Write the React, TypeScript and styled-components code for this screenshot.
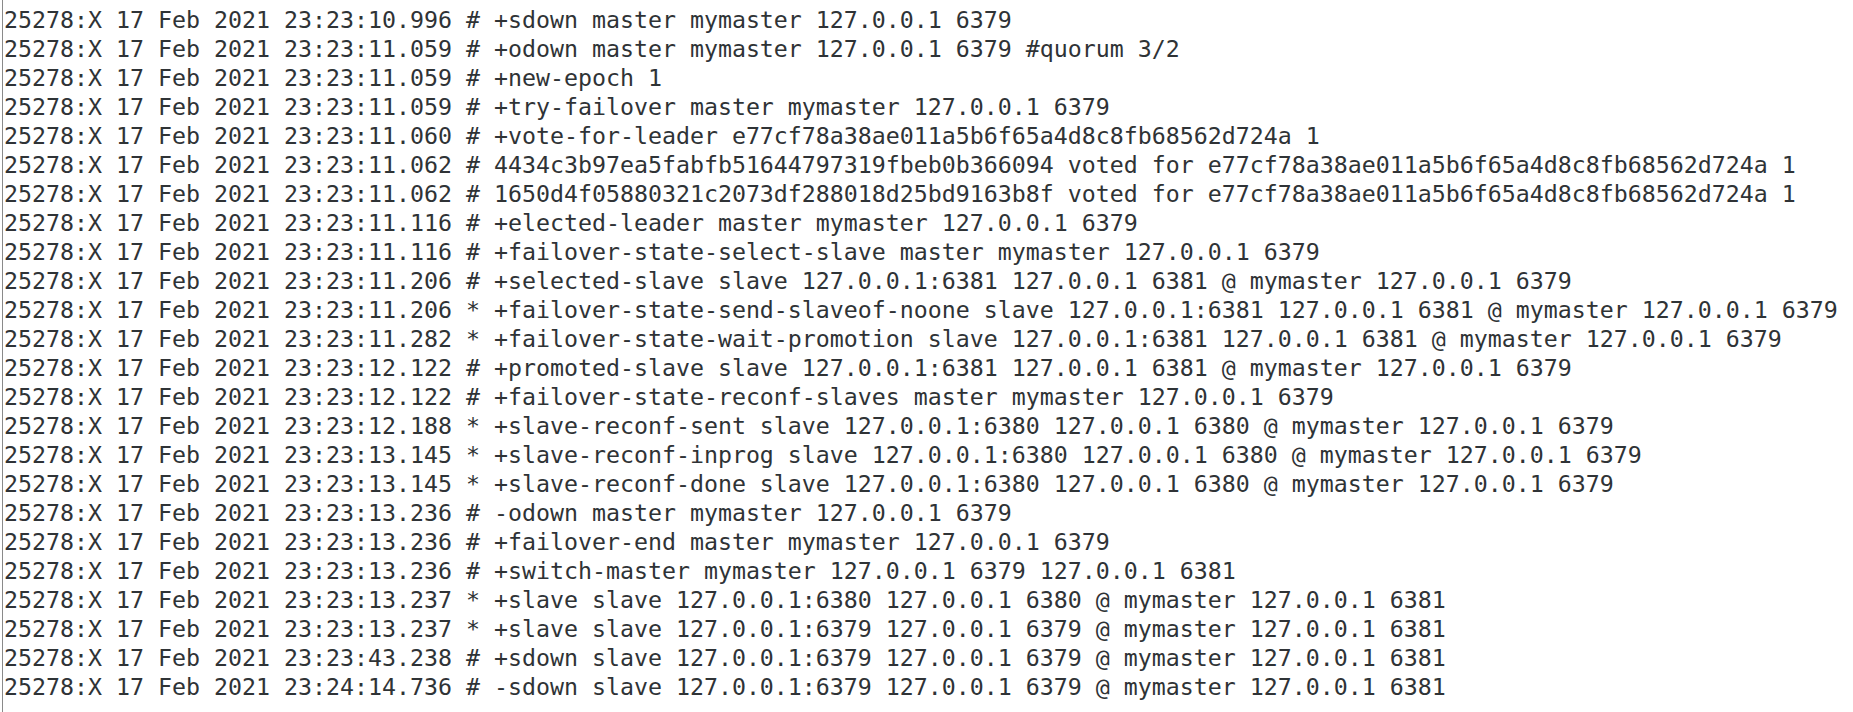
import React from "react";
import styled, { createGlobalStyle } from "styled-components";

const GlobalStyle = createGlobalStyle`
  html, body {
    margin: 0;
    padding: 0;
    background: #ffffff;
  }
  body {
    width: 1853px;
    height: 712px;
    overflow: hidden;
  }
`;

const Page = styled.div`
  display: flex;
  height: 712px;
  padding-left: 2px;
  box-sizing: border-box;
  background: #ffffff;
`;

const Log = styled.div`
  flex: 1;
  display: flex;
  flex-direction: column;
  border-left: 1px solid #8a8a8a;
  padding: 5px 0 0 1px;
  font-family: "DejaVu Sans Mono", "Liberation Mono", monospace;
  font-size: 23.25px;
  line-height: 29px;
  color: #2f3336;
  white-space: pre;
`;

const Line = styled.div`
  display: block;
  flex: none;
`;

const lines = [
  "25278:X 17 Feb 2021 23:23:10.996 # +sdown master mymaster 127.0.0.1 6379",
  "25278:X 17 Feb 2021 23:23:11.059 # +odown master mymaster 127.0.0.1 6379 #quorum 3/2",
  "25278:X 17 Feb 2021 23:23:11.059 # +new-epoch 1",
  "25278:X 17 Feb 2021 23:23:11.059 # +try-failover master mymaster 127.0.0.1 6379",
  "25278:X 17 Feb 2021 23:23:11.060 # +vote-for-leader e77cf78a38ae011a5b6f65a4d8c8fb68562d724a 1",
  "25278:X 17 Feb 2021 23:23:11.062 # 4434c3b97ea5fabfb51644797319fbeb0b366094 voted for e77cf78a38ae011a5b6f65a4d8c8fb68562d724a 1",
  "25278:X 17 Feb 2021 23:23:11.062 # 1650d4f05880321c2073df288018d25bd9163b8f voted for e77cf78a38ae011a5b6f65a4d8c8fb68562d724a 1",
  "25278:X 17 Feb 2021 23:23:11.116 # +elected-leader master mymaster 127.0.0.1 6379",
  "25278:X 17 Feb 2021 23:23:11.116 # +failover-state-select-slave master mymaster 127.0.0.1 6379",
  "25278:X 17 Feb 2021 23:23:11.206 # +selected-slave slave 127.0.0.1:6381 127.0.0.1 6381 @ mymaster 127.0.0.1 6379",
  "25278:X 17 Feb 2021 23:23:11.206 * +failover-state-send-slaveof-noone slave 127.0.0.1:6381 127.0.0.1 6381 @ mymaster 127.0.0.1 6379",
  "25278:X 17 Feb 2021 23:23:11.282 * +failover-state-wait-promotion slave 127.0.0.1:6381 127.0.0.1 6381 @ mymaster 127.0.0.1 6379",
  "25278:X 17 Feb 2021 23:23:12.122 # +promoted-slave slave 127.0.0.1:6381 127.0.0.1 6381 @ mymaster 127.0.0.1 6379",
  "25278:X 17 Feb 2021 23:23:12.122 # +failover-state-reconf-slaves master mymaster 127.0.0.1 6379",
  "25278:X 17 Feb 2021 23:23:12.188 * +slave-reconf-sent slave 127.0.0.1:6380 127.0.0.1 6380 @ mymaster 127.0.0.1 6379",
  "25278:X 17 Feb 2021 23:23:13.145 * +slave-reconf-inprog slave 127.0.0.1:6380 127.0.0.1 6380 @ mymaster 127.0.0.1 6379",
  "25278:X 17 Feb 2021 23:23:13.145 * +slave-reconf-done slave 127.0.0.1:6380 127.0.0.1 6380 @ mymaster 127.0.0.1 6379",
  "25278:X 17 Feb 2021 23:23:13.236 # -odown master mymaster 127.0.0.1 6379",
  "25278:X 17 Feb 2021 23:23:13.236 # +failover-end master mymaster 127.0.0.1 6379",
  "25278:X 17 Feb 2021 23:23:13.236 # +switch-master mymaster 127.0.0.1 6379 127.0.0.1 6381",
  "25278:X 17 Feb 2021 23:23:13.237 * +slave slave 127.0.0.1:6380 127.0.0.1 6380 @ mymaster 127.0.0.1 6381",
  "25278:X 17 Feb 2021 23:23:13.237 * +slave slave 127.0.0.1:6379 127.0.0.1 6379 @ mymaster 127.0.0.1 6381",
  "25278:X 17 Feb 2021 23:23:43.238 # +sdown slave 127.0.0.1:6379 127.0.0.1 6379 @ mymaster 127.0.0.1 6381",
  "25278:X 17 Feb 2021 23:24:14.736 # -sdown slave 127.0.0.1:6379 127.0.0.1 6379 @ mymaster 127.0.0.1 6381",
];

export default function App() {
  return (
    <>
      <GlobalStyle />
      <Page>
        <Log>
          {lines.map((l, i) => (
            <Line key={i}>{l}</Line>
          ))}
        </Log>
      </Page>
    </>
  );
}
